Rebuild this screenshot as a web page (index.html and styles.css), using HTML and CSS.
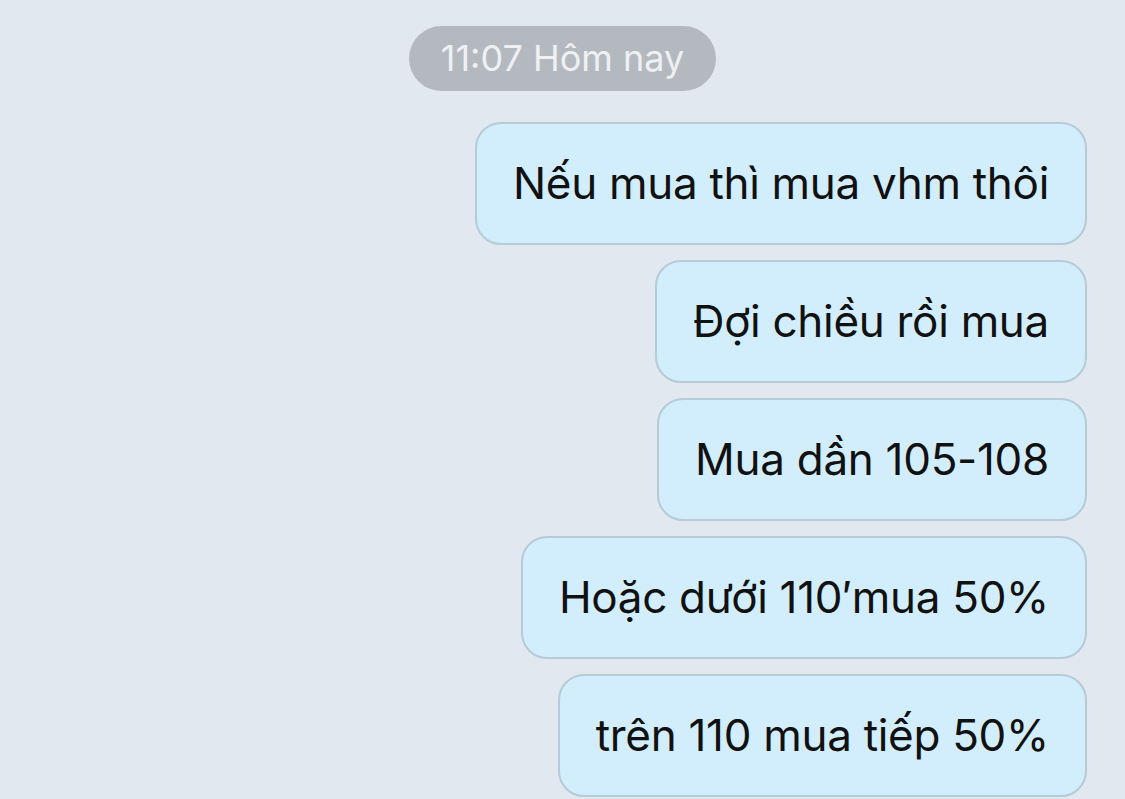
FILE: index.html
```html
<!DOCTYPE html>
<html lang="vi">
<head>
    <meta charset="UTF-8">
    <title>Tin nhắn</title>
    <link rel="stylesheet" href="styles.css">
</head>
<body>
    <div class="chat">
        <div class="time-row">
            <span class="time-pill">11:07 Hôm nay</span>
        </div>
        <div class="messages">
            <div class="bubble">Nếu mua thì mua vhm thôi</div>
            <div class="bubble">Đợi chiều rồi mua</div>
            <div class="bubble">Mua dần 105-108</div>
            <div class="bubble">Hoặc dưới 110′mua 50%</div>
            <div class="bubble">trên 110 mua tiếp 50%</div>
        </div>
    </div>
</body>
</html>
```

FILE: styles.css
```css
body {
    margin: 0;
    background-color: #e1e8f0;
    font-family: "Inter", "Noto Sans", sans-serif;
    color: #111;
}
.chat {
    height: 799px;
    overflow: hidden;
}
.time-row {
    display: flex;
    justify-content: center;
    padding-top: 26px;
}
.time-pill {
    background-color: #b4b9c0;
    color: #eef0f3;
    font-size: 36px;
    line-height: 65px;
    height: 65px;
    padding: 0 32px;
    border-radius: 33px;
}
.messages {
    display: flex;
    flex-direction: column;
    align-items: flex-end;
    gap: 15px;
    margin-top: 31px;
    padding-right: 38px;
}
.bubble {
    background-color: #d2eefc;
    border: 2px solid #b5cbd7;
    border-radius: 26px;
    padding: 36px 36px;
    font-size: 44px;
    line-height: 47px;
    letter-spacing: -0.3px;
    white-space: nowrap;
}
```
